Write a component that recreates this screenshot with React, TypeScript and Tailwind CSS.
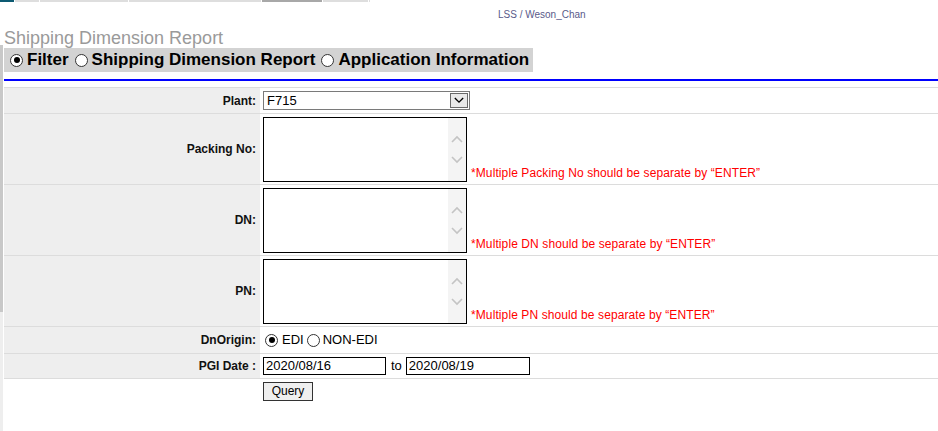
import React from "react";

const font = "font-['Liberation_Sans',Arial,sans-serif]";

const Radio = ({ checked }: { checked?: boolean }) => (
  <span className="inline-flex shrink-0 items-center justify-center rounded-full border border-[#333] bg-white w-[13px] h-[13px]">
    {checked && <span className="block w-[6px] h-[6px] rounded-full bg-black" />}
  </span>
);

const Chevron = ({ up, className }: { up?: boolean; className?: string }) => (
  <svg width="12" height="8" viewBox="0 0 12 8" className={className}>
    <path
      d={up ? "M1 7 L6 2 L11 7" : "M1 1 L6 6 L11 1"}
      fill="none"
      stroke="currentColor"
      strokeWidth="1.6"
    />
  </svg>
);

const TextArea = () => (
  <div className="flex w-[204px] h-[65px] border border-black bg-white">
    <div className="flex-1" />
    <div className="w-[18px] h-full bg-[#f4f4f4] flex flex-col items-center justify-center gap-[13px] text-[#c4c4c4]">
      <Chevron up />
      <Chevron />
    </div>
  </div>
);

const Row = ({
  label,
  h,
  children,
  plain,
}: {
  label?: string;
  h: string;
  children: React.ReactNode;
  plain?: boolean;
}) => (
  <div className={"flex border-t border-[#dcdcdc] " + h}>
    <div
      className={
        "w-[256px] shrink-0 flex items-center justify-end pr-[4px] text-[12px] font-bold text-[#111] " +
        (plain ? "bg-white" : "bg-[#eeeeee]")
      }
    >
      {label}
    </div>
    <div className="flex-1 pl-[3px]">{children}</div>
  </div>
);

const Note = ({ text }: { text: string }) => (
  <span className="ml-[4px] mb-[1px] text-[12px] leading-[15px] tracking-[0.1px] text-[#ff0000] whitespace-nowrap">
    {text}
  </span>
);

export default function App() {
  const tabs = [
    { name: "Filter", checked: true },
    { name: "Shipping Dimension Report" },
    { name: "Application Information" },
  ];
  return (
    <div className={"w-[938px] h-[431px] overflow-hidden bg-white flex flex-col " + font}>
      {/* top strip */}
      <div className="h-[2px] flex shrink-0">
        <div className="w-[14px] bg-[#0d5a72]" />
        <div className="w-[1px]" />
        <div className="w-[24px] bg-[#dedede]" />
        <div className="w-[1px]" />
        <div className="w-[88px] bg-[#dedede]" />
        <div className="w-[1px]" />
        <div className="w-[132px] bg-[#dedede]" />
        <div className="w-[1px]" />
        <div className="w-[60px] bg-[#a8a8a8]" />
        <div className="w-[1px]" />
        <div className="w-[45px] bg-[#dedede]" />
        <div className="w-[1px]" />
        <div className="w-[1px] bg-[#dedede]" />
      </div>

      <div className="flex flex-1">
        {/* frame edge */}
        <div className="w-[3px] shrink-0 flex flex-col">
          <div className="h-[43px]" />
          <div className="h-[267px] bg-[#c8c8c8]" />
          <div className="flex-1 bg-[#eeeeee]" />
        </div>

        <div className="flex-1 pl-[1px] flex flex-col">
          <div className="h-[26px] pl-[494px] pt-[7px] text-[10px] leading-[12px] text-[#5a5a8a]">
            LSS / Weson_Chan
          </div>
          <div className="h-[20px] text-[18px] leading-[20px] text-[#9a9a9a] whitespace-nowrap">
            Shipping Dimension Report
          </div>
          <div className="h-[24px] w-[529px] bg-[#d3d3d3] flex items-center pl-[6px] text-[17px] font-bold text-black whitespace-nowrap">
            {tabs.map((t, i) => (
              <span key={i} className={"flex items-center gap-[4px] " + (i > 0 ? "ml-[6px]" : "")}>
                <Radio checked={t.checked} />
                <span>{t.name}</span>
              </span>
            ))}
          </div>
          <div className="mt-[7px] h-[2px] bg-[#0000ff]" />
          <div className="h-[6px]" />

          <Row label="Plant:" h="h-[26px]">
            <div className="pt-[3px]">
              <div className="w-[207px] h-[19px] border border-[#7a7a7a] bg-white flex items-center pl-[3px] text-[13px] text-black">
                <span className="flex-1">F715</span>
                <span className="w-[18px] h-[15px] mr-[1px] border border-[#6a6a6a] bg-[#e9e9e9] flex items-center justify-center">
                  <Chevron className="text-black w-[10px] h-[7px]" />
                </span>
              </div>
            </div>
          </Row>

          {[
            { label: "Packing No:", note: "*Multiple Packing No should be separate by “ENTER”" },
            { label: "DN:", note: "*Multiple DN should be separate by “ENTER”" },
            { label: "PN:", note: "*Multiple PN should be separate by “ENTER”" },
          ].map((r) => (
            <Row key={r.label} label={r.label} h="h-[71px]">
              <div className="flex items-end pt-[3px]">
                <TextArea />
                <Note text={r.note} />
              </div>
            </Row>
          ))}

          <Row label="DnOrigin:" h="h-[27px]">
            <div className="h-full flex items-center pl-[2px] text-[13px] text-black">
              <Radio checked />
              <span className="ml-[4px] mr-[3px]">EDI</span>
              <Radio />
              <span className="ml-[3px]">NON-EDI</span>
            </div>
          </Row>

          <Row label="PGI Date :" h="h-[25px]">
            <div className="h-full flex items-center text-[13px] text-black">
              <div className="w-[123px] h-[18px] border border-black pl-[2px] leading-[16px]">2020/08/16</div>
              <span className="ml-[5px] mr-[4px]">to</span>
              <div className="w-[124px] h-[18px] border border-black pl-[2px] leading-[16px]">2020/08/19</div>
            </div>
          </Row>

          <Row h="flex-1" plain>
            <div className="pt-[3px] flex">
              <button className="block w-[50px] h-[19px] border border-[#333] bg-[#efefef] text-[12px] leading-[17px] text-black">
                Query
              </button>
            </div>
          </Row>
        </div>
      </div>
    </div>
  );
}
